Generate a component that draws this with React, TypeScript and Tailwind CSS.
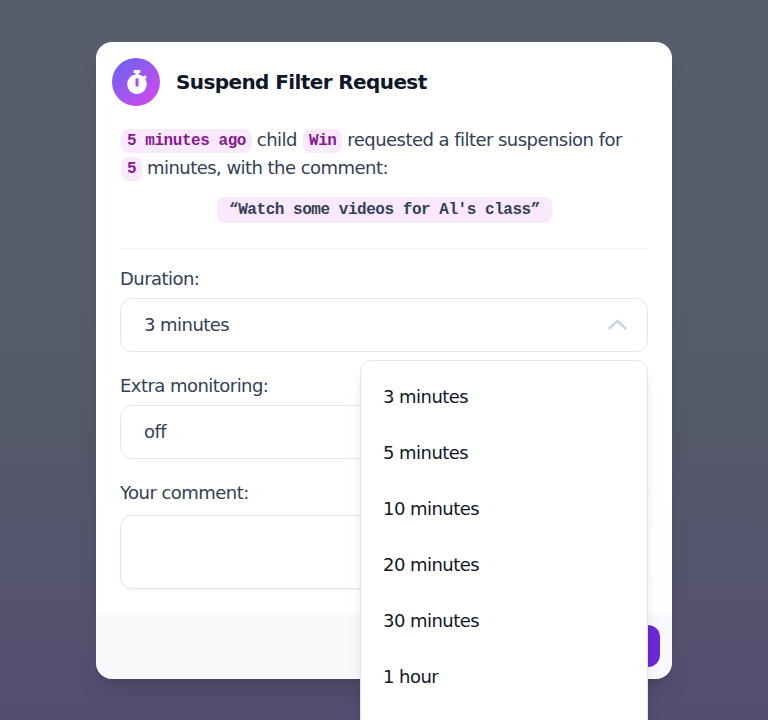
import React from "react";
import { FaStopwatch } from "react-icons/fa";

const durations = ["3 minutes", "5 minutes", "10 minutes", "20 minutes", "30 minutes", "1 hour"];

function Chip({ children }: { children: React.ReactNode }) {
  return (
    <span className="relative -top-px ml-px -mr-[0.4px] rounded-lg bg-fuchsia-100 px-1.5 py-[3px] font-['Liberation_Mono',monospace] text-base font-bold tracking-[-0.45px] text-[#86198f]">
      {children}
    </span>
  );
}

function SelectBox({ value, children }: { value: string; children?: React.ReactNode }) {
  return (
    <div className="relative mt-[5px] flex h-[54px] items-center justify-between rounded-xl border border-[#e2e8f0] bg-white pl-[23px] pr-5">
      <span>{value}</span>
      {children}
    </div>
  );
}

export default function App() {
  return (
    <div className="flex h-[720px] w-full justify-center overflow-hidden bg-[linear-gradient(to_bottom,#575d6a_0px,#575d6a_300px,#545a68_400px,#554e72_720px)] pt-[42px] font-['DejaVu_Sans',sans-serif] text-lg leading-7 tracking-[-0.54px] text-[#334155]">
      <div className="h-[637px] w-[576px] rounded-2xl bg-white shadow-xl">
        <header className="flex items-center gap-4 px-4 pt-4">
          <div className="flex size-12 items-center justify-center rounded-full bg-[linear-gradient(to_bottom_right,#6366f1,#d946ef)]">
            <FaStopwatch className="ml-[2px] size-6 text-white" />
          </div>
          <h1 className="text-xl font-bold tracking-[-0.6px] text-[#0f172a]">Suspend Filter Request</h1>
        </header>
        <main className="h-[507px] px-6 pt-5">
          <p>
            <Chip>5 minutes ago</Chip> child <Chip>Win</Chip> requested a filter suspension for <br />
            <Chip>5</Chip> minutes, with the comment:
          </p>
          <div className="mt-[15px] flex justify-center">
            <span className="ml-px flex h-[26px] items-center rounded-lg bg-fuchsia-100 px-3 font-['Liberation_Mono',monospace] text-base font-bold tracking-[-0.46px]">
              “Watch some videos for Al's class”
            </span>
          </div>
          <hr className="mt-[25px] border-[#f1f5f9]" />
          <section className="mt-4">
            <div>Duration:</div>
            <SelectBox value="3 minutes">
              <svg className="h-3 w-5" viewBox="0 0 20 12" fill="none" stroke="#cbd5e1" strokeWidth="2.6" strokeLinecap="round" strokeLinejoin="round">
                <path d="m2.6 9.3 7.8-7.4 7.8 7.4" />
              </svg>
              <div className="absolute -right-px top-[61px] z-10 h-[420px] w-72 rounded-xl border border-[#e2e8f0] bg-white py-2 text-[#0f172a] shadow-lg">
                {durations.map((label) => (
                  <div key={label} className="flex h-14 items-center pl-[22px]">
                    {label}
                  </div>
                ))}
              </div>
            </SelectBox>
          </section>
          <section className="mt-5">
            <div>Extra monitoring:</div>
            <SelectBox value="off" />
          </section>
          <section className="relative mt-5">
            <div>Your comment:</div>
            <div className="mt-2 h-[74px] rounded-xl border border-[#e2e8f0] bg-white shadow-xs" />
            <div className="absolute -right-px top-[11px] size-px bg-[#ddd6fe]" />
          </section>
        </main>
        <footer className="flex h-[66px] justify-end rounded-b-3xl bg-[#f8fafc] p-3">
          <div className="h-[42px] w-32 rounded-xl bg-[#6d28d9]" />
        </footer>
      </div>
    </div>
  );
}
